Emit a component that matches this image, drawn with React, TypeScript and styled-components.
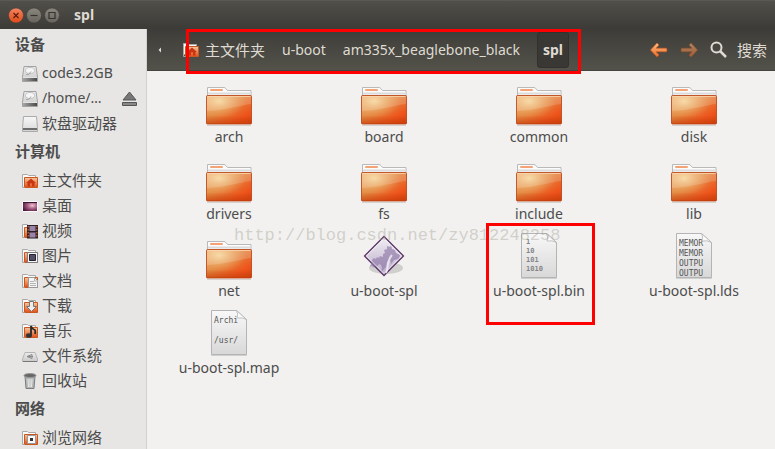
import React from "react";
import styled, { createGlobalStyle, css } from "styled-components";

const uiFont = `"Noto Sans", "Noto Sans CJK SC", sans-serif`;

const GlobalStyle = createGlobalStyle`
  * { box-sizing: border-box; }
  body {
    margin: 0;
    background: #f2f1f0;
    color: #4c4c4c;
    font-family: ${uiFont};
    font-size: 14px;
  }
  button {
    margin: 0;
    padding: 0;
    border: 0;
    background: none;
    color: inherit;
    font: inherit;
    cursor: default;
  }
  svg { display: block; flex: none; }
`;

const Window = styled.div`
  position: relative;
  display: flex;
  flex-direction: column;
  height: 100vh;
  overflow: hidden;
`;

const TitleBar = styled.header`
  display: flex;
  align-items: center;
  flex: none;
  height: 29px;
  padding: 0 8px;
  gap: 2px;
  border-top: 1px solid #5b5a52;
  background: linear-gradient(#504f49, #3c3b37);
  color: #dfdbd2;
`;

const Title = styled.h1`
  margin: 0 0 0 12px;
  font-size: 14px;
  line-height: 20px;
  font-weight: 700;
`;

const Body = styled.div`
  display: flex;
  flex: 1;
  min-height: 0;
`;

const Sidebar = styled.nav`
  flex: none;
  width: 147px;
  overflow: hidden;
  border-right: 1px solid #d2d1cf;
  background: #e7e6e4;
`;

const GroupTitle = styled.h2`
  margin: 0;
  padding: 0 0 2px 15px;
  font-size: 15px;
  line-height: 30px;
  font-weight: 700;
`;

const PlaceList = styled.ul`
  margin: 0;
  padding: 0;
  list-style: none;
`;

const PlaceRow = styled.li`
  display: flex;
  align-items: center;
  justify-content: space-between;
  height: 25px;
  padding: 0 9px 0 22px;
`;

const PlaceButton = styled.button`
  display: flex;
  align-items: center;
  gap: 4px;
  white-space: nowrap;
`;

const PlaceName = styled.span<{ $cjk: boolean }>`
  line-height: 22px;
  padding-bottom: 2px;
  font-size: ${(p) => (p.$cjk ? 15 : 14)}px;
`;

const Content = styled.div`
  display: flex;
  flex-direction: column;
  flex: 1;
  min-width: 0;
`;

const Toolbar = styled.div`
  display: flex;
  align-items: center;
  justify-content: space-between;
  flex: none;
  height: 42px;
  padding: 0 8px 0 3px;
  border-bottom: 1px solid #45443f;
  background: linear-gradient(#3d3c38, #53524a);
  color: #dfdbd2;
`;

const PathBar = styled.nav`
  display: flex;
  align-items: center;
  gap: 1px;
`;

const ScrollButton = styled.button`
  height: 36px;
  padding: 0 8px;
  margin-right: 4px;
`;

const PathButton = styled.button<{ $current?: boolean; $cjk?: boolean }>`
  display: flex;
  align-items: center;
  gap: 6px;
  height: 36px;
  padding: 0 8px;
  line-height: 20px;
  white-space: nowrap;
  ${(p) => p.$cjk && css`font-size: 15px;`}
  ${(p) =>
    p.$current &&
    css`
      margin-left: 8px;
      padding: 0 5px;
      border: 1px solid #32312d;
      border-radius: 3px;
      background: #393834;
      font-weight: 700;
    `}
`;

const Tools = styled.div`
  display: flex;
  align-items: center;
  gap: 12px;
`;

const SearchButton = styled.button`
  display: flex;
  align-items: center;
  gap: 10px;
  font-size: 15px;
`;

const FileGrid = styled.main`
  display: grid;
  grid-template-columns: repeat(4, 1fr);
  gap: 1px;
  padding: 7px 4px 0 5px;
`;

const FileButton = styled.button`
  display: flex;
  flex-direction: column;
  align-items: center;
  height: 76px;
  line-height: 22px;
`;

const Watermark = styled.div`
  position: absolute;
  left: 234px;
  top: 225px;
  color: rgba(160, 160, 145, 0.42);
  font-family: "Liberation Mono", monospace;
  font-size: 17px;
  line-height: 22px;
  pointer-events: none;
`;

const Mark = styled.div<{ $target: "path" | "file" }>`
  position: absolute;
  border: 3px solid #fe0000;
  pointer-events: none;
  ${(p) =>
    p.$target === "path"
      ? css`left: 186px; top: 29px; width: 395px; height: 45px;`
      : css`left: 486px; top: 223px; width: 109px; height: 102px;`}
`;

const GradientDefs = styled.svg`
  position: absolute;
`;

const Gradients = () => (
  <GradientDefs width="0" height="0" aria-hidden="true">
    <defs>
      <linearGradient id="front" x1="0" y1="0" x2="1" y2="1">
        <stop offset="0" stopColor="#f0ae70" />
        <stop offset="0.4" stopColor="#e28b43" />
        <stop offset="0.78" stopColor="#ee531b" />
        <stop offset="1" stopColor="#d9450f" />
      </linearGradient>
      <radialGradient id="glow" cx="0.28" cy="0.2" r="0.6">
        <stop offset="0" stopColor="#f7dca0" stopOpacity="0.9" />
        <stop offset="1" stopColor="#f0a868" stopOpacity="0" />
      </radialGradient>
      <linearGradient id="floor" x1="0" y1="0" x2="0" y2="1">
        <stop offset="0.7" stopColor="#c03a08" stopOpacity="0" />
        <stop offset="1" stopColor="#c03a08" stopOpacity="0.6" />
      </linearGradient>
      <linearGradient id="paper" x1="0" y1="0" x2="0" y2="1">
        <stop offset="0" stopColor="#f8f8f8" />
        <stop offset="1" stopColor="#d8d8d8" />
      </linearGradient>
      <linearGradient id="small" x1="0" y1="0" x2="0" y2="1">
        <stop offset="0" stopColor="#f5c9a0" />
        <stop offset="1" stopColor="#e04e16" />
      </linearGradient>
      <linearGradient id="metal" x1="0" y1="0" x2="0" y2="1">
        <stop offset="0" stopColor="#ececec" />
        <stop offset="1" stopColor="#c9c9c9" />
      </linearGradient>
      <linearGradient id="base" x1="0" y1="0" x2="1" y2="0">
        <stop offset="0" stopColor="#a5a5a5" />
        <stop offset="1" stopColor="#4a4a4a" />
      </linearGradient>
      <linearGradient id="gem" x1="0" y1="0" x2="0" y2="1">
        <stop offset="0" stopColor="#f1eef3" />
        <stop offset="1" stopColor="#b9abc9" />
      </linearGradient>
      <linearGradient id="arrow" x1="0" y1="0" x2="0" y2="1">
        <stop offset="0" stopColor="#fbbf83" />
        <stop offset="1" stopColor="#ef6a26" />
      </linearGradient>
      <linearGradient id="closeFill" x1="0" y1="0" x2="0" y2="1">
        <stop offset="0" stopColor="#f58463" />
        <stop offset="1" stopColor="#df4a16" />
      </linearGradient>
      <linearGradient id="greyFill" x1="0" y1="0" x2="0" y2="1">
        <stop offset="0" stopColor="#8a887f" />
        <stop offset="1" stopColor="#66645c" />
      </linearGradient>
      <radialGradient id="wall" cx="0.65" cy="0.4" r="0.7">
        <stop offset="0" stopColor="#f3c4d0" />
        <stop offset="0.5" stopColor="#a0567e" />
        <stop offset="1" stopColor="#4a1638" />
      </radialGradient>
    </defs>
  </GradientDefs>
);

const WindowIcon = ({ kind }: { kind: "close" | "min" | "max" }) => (
  <svg width="16" height="18" viewBox="0 0 16 18">
    <circle cx="8" cy="9.5" r="7.5" fill={kind === "close" ? "url(#closeFill)" : "url(#greyFill)"} stroke="#3d3c37" strokeWidth="0.6" />
    <g fill="none" stroke={kind === "close" ? "#5a1d0b" : "#34332f"} strokeWidth="1.2">
      {kind === "close" && <path d="M5.500 7l5 5M10.500 7l-5 5" />}
      {kind === "min" && <path d="M4.500 9.500h7" />}
      {kind === "max" && <path d="M5 6.500h6v6H5z" />}
    </g>
  </svg>
);

const FolderIcon = () => (
  <svg width="48" height="48" viewBox="0 0 48 48">
    <path d="M2 47.5h44" stroke="#000" strokeOpacity="0.12" />
    <path d="M2.500 18V9.500h16.500q1 0 1.800 1l1.700 2h23.500V18z" fill="#fbfbfb" stroke="#b9b9b9" />
    <path d="M3 14.500h43v2H3z" fill="#dcdcdc" />
    <rect x="5" y="11" width="13" height="2" rx="1" fill="#f3a376" />
    <rect x="1.500" y="17.500" width="45" height="28.500" rx="1" fill="url(#front)" />
    <rect x="1.500" y="17.500" width="45" height="28.500" rx="1" fill="url(#glow)" />
    <path d="M2 18h44v8C36 27 22 32 2 33z" fill="#fff" fillOpacity="0.16" />
    <rect x="1.500" y="17.500" width="45" height="28.500" rx="1" fill="url(#floor)" />
    <path d="M2.500 18.500h43" stroke="#fbd6ae" strokeOpacity="0.8" />
    <rect x="1.500" y="17.500" width="45" height="28.500" rx="1" fill="none" stroke="#b83f10" strokeOpacity="0.8" />
  </svg>
);

const PageIcon = ({ lines, binary }: { lines: string[]; binary?: boolean }) => (
  <svg width="48" height="48" viewBox="0 0 48 48">
    <path d="M6 46.500h36" stroke="#000" strokeOpacity="0.14" />
    <path d="M6.500 1.500h25l10 9v35h-35z" fill="url(#paper)" stroke="#b4b4b4" />
    <g
      fill={binary ? "#858585" : "#555"}
      fontFamily="'DejaVu Sans Mono', monospace"
      fontSize={binary ? 7 : 8}
      fontWeight={binary ? 700 : 400}
    >
      {lines.map((line, i) => (
        <text key={i} x={binary ? 11 : 9} y={binary ? 12 + i * 9 : 14 + i * 10}>
          {line}
        </text>
      ))}
    </g>
    <path d="M31.500 1.500l10 9q-4-2.500-9.500-1.500 1.500-4-.5-7.500z" fill="#fafafa" stroke="#b4b4b4" strokeWidth="0.800" />
  </svg>
);

const ProgramIcon = () => (
  <svg width="48" height="48" viewBox="0 0 48 48">
    <ellipse cx="26" cy="36" rx="17" ry="6" fill="#000" fillOpacity="0.14" />
    <path d="M24 4.500L43.500 24 24 43.500 4.500 24z" fill="url(#gem)" stroke="#5c3566" strokeWidth="1.300" />
    <path
      d="M12 28l2-2 2 1 1-2 2 1 1-2 3 1v-3l2-1-1-3 3-1v-3l3 1 1-2 1 4 3 1 1 3 4 2-1 4-5 1-3 4-1-4-3 2-1 5-3 3-2 4 1-7-2-3-2 1-1 2-2-1-1 2-2-2-2 1z"
      fill="#8f78a8"
      fillOpacity="0.65"
    />
    <path d="M26 41c3-6 0-11 6-18" fill="none" stroke="#f3eff6" strokeWidth="2" strokeOpacity="0.8" />
    <path d="M24 6.500L41.500 24 24 41.500 6.500 24z" fill="none" stroke="#fff" strokeOpacity="0.6" />
  </svg>
);

type PlaceKind =
  | "disk" | "floppy" | "home" | "desktop" | "video" | "picture" | "document"
  | "download" | "music" | "system" | "trash" | "network";

const SmallFolder = () => (
  <>
    <path d="M.5 13V1.500h5l1 1h7V6" fill="#f9f9f9" stroke="#a9a9a9" />
    <path d="M2.500 4.500h13v10h-13z" fill="url(#small)" stroke="#c9571f" />
    <path d="M.5 2v12.500h2" fill="none" stroke="#a9a9a9" />
  </>
);

const placeArt: Record<PlaceKind, React.ReactNode> = {
  disk: (
    <>
      <path d="M2 .5h12l1.500 10.500v4.500H.5V11z" fill="url(#metal)" stroke="#a2a2a2" />
      <ellipse cx="8" cy="4.500" rx="4.500" ry="3" fill="#f6f6f6" stroke="#b8b8b8" strokeWidth="0.800" />
      <path d="M4 8.500q3 1.500 5-3" fill="none" stroke="#a8a8a8" />
      <path d="M1 11.500h14V15H1z" fill="url(#base)" />
      <path d="M1 11.500h14" stroke="#e4e4e4" />
    </>
  ),
  floppy: (
    <>
      <path d="M1.500.5h13l1 11v4H.5v-4z" fill="url(#paper)" stroke="#aaa" />
      <path d="M1 13h14" stroke="#222" strokeWidth="1.200" />
      <path d="M1 14.500h14" stroke="#d5d5d5" />
    </>
  ),
  home: (
    <>
      <SmallFolder />
      <path d="M9 5.500l5 4.500h-1.500v3.500h-2.500v-3h-2v3H5.500V10H4z" fill="#c93611" />
    </>
  ),
  desktop: (
    <>
      <path d="M.5 3.500h15v10H.5z" fill="url(#wall)" stroke="#fafafa" />
      <path d="M1 4.500h14" stroke="#3b1730" />
    </>
  ),
  video: (
    <>
      <SmallFolder />
      <path d="M5 2h11v13.500H5z" fill="#2b2028" />
      <path d="M7.500 3h6v5h-6zM7.500 9.500h6v5h-6z" fill="#9b84a8" />
      <path d="M6.200 3v12M14.800 3v12" stroke="#e9752f" strokeDasharray="1.500 1.500" />
    </>
  ),
  picture: (
    <>
      <SmallFolder />
      <path d="M5.500 4.500h10v10h-10z" fill="#f6f6f6" stroke="#7c7c7c" />
      <path d="M7.500 6.500h6v6h-6z" fill="#554c66" stroke="#26232e" />
    </>
  ),
  document: (
    <>
      <SmallFolder />
      <path d="M6.500 4.500h6l3 3v7h-9z" fill="#f5f5f5" stroke="#989898" />
      <path d="M8 8.500h4M8 10.500h6M8 12.500h6M12.500 5v3h3" fill="none" stroke="#b2b2b2" />
    </>
  ),
  download: (
    <>
      <SmallFolder />
      <path d="M7.500 3.500h4v5h3l-5 5-5-5h3z" fill="#ededed" stroke="#777" />
    </>
  ),
  music: (
    <>
      <SmallFolder />
      <path d="M9 12V3q1 3 3 3.500T13 11" fill="none" stroke="#292929" strokeWidth="1.800" />
      <ellipse cx="7" cy="12.500" rx="3" ry="2.300" fill="#333" />
    </>
  ),
  system: (
    <>
      <path d="M3 4.500h10l2.500 6.500v2.500H.5V11z" fill="url(#metal)" stroke="#b4b4b4" />
      <path d="M1 13.500h14" stroke="#777" />
      <path d="M5 8.500l5-2v4l-5-2h6" fill="none" stroke="#8a8a8a" />
    </>
  ),
  trash: (
    <>
      <path d="M3 3h10l-1 12.500H4z" fill="#b5b7b7" stroke="#7b7d7d" />
      <path d="M6 6l.5 8M8 6v8M10 6l-.5 8" stroke="#e8e8e8" />
      <ellipse cx="8" cy="2.500" rx="6" ry="2" fill="#666" stroke="#999" />
    </>
  ),
  network: (
    <>
      <SmallFolder />
      <path d="M5.500 5.500h8v8h-8z" fill="#fafafa" stroke="#999" />
      <path d="M8 8h3v3H8z" fill="#333" />
    </>
  ),
};

const PlaceIcon = ({ kind }: { kind: PlaceKind }) => (
  <svg width="16" height="16" viewBox="0 0 16 16">{placeArt[kind]}</svg>
);

const EjectIcon = () => (
  <svg width="15" height="16" viewBox="0 0 15 16">
    <path d="M7.500 1l6.500 8H1z" fill="#777" stroke="#555" />
    <path d="M.5 11.500h14v3H.5z" fill="#888" stroke="#555" />
  </svg>
);

const ArrowIcon = ({ forward }: { forward?: boolean }) => (
  <svg width="18" height="16" viewBox="0 0 18 16" opacity={forward ? 0.55 : 1}>
    <path
      d={
        forward
          ? "M17.500 8l-6.500 7-2-2 3-3.200H1.500Q.5 8 1.500 6.200H12L9 3l2-2z"
          : "M.5 8L7 1l2 2-3 3.200h10.500q1 1.800 0 3.600H6L9 13l-2 2z"
      }
      fill="url(#arrow)"
      stroke="#d2581f"
      strokeWidth="0.600"
    />
  </svg>
);

const SearchIcon = () => (
  <svg width="17" height="17" viewBox="0 0 17 17" fill="none" stroke="#dfdbd2">
    <circle cx="6.500" cy="6.500" r="5" strokeWidth="2" />
    <path d="M10 10l6 6" strokeWidth="2.500" />
  </svg>
);

interface Place {
  name: string;
  kind: PlaceKind;
  ejectable?: boolean;
}

const groups: { title: string; places: Place[] }[] = [
  {
    title: "设备",
    places: [
      { name: "code3.2GB", kind: "disk" },
      { name: "/home/…", kind: "disk", ejectable: true },
      { name: "软盘驱动器", kind: "floppy" },
    ],
  },
  {
    title: "计算机",
    places: [
      { name: "主文件夹", kind: "home" },
      { name: "桌面", kind: "desktop" },
      { name: "视频", kind: "video" },
      { name: "图片", kind: "picture" },
      { name: "文档", kind: "document" },
      { name: "下载", kind: "download" },
      { name: "音乐", kind: "music" },
      { name: "文件系统", kind: "system" },
      { name: "回收站", kind: "trash" },
    ],
  },
  { title: "网络", places: [{ name: "浏览网络", kind: "network" }] },
];

const folder = <FolderIcon />;

const files: { name: string; icon: React.ReactNode }[] = [
  ...["arch", "board", "common", "disk", "drivers", "fs", "include", "lib", "net"].map((name) => ({
    name,
    icon: folder,
  })),
  { name: "u-boot-spl", icon: <ProgramIcon /> },
  { name: "u-boot-spl.bin", icon: <PageIcon binary lines={["1", "10", "101", "1010"]} /> },
  { name: "u-boot-spl.lds", icon: <PageIcon lines={["MEMOR", "MEMOR", "OUTPU", "OUTPU"]} /> },
  { name: "u-boot-spl.map", icon: <PageIcon lines={["Archi", "", "/usr/"]} /> },
];

const isCjk = (text: string) => /[\u4e00-\u9fff]/.test(text);

export default function App() {
  return (
    <>
      <GlobalStyle />
      <Gradients />
      <Window>
        <TitleBar>
          <button aria-label="Close"><WindowIcon kind="close" /></button>
          <button aria-label="Minimize"><WindowIcon kind="min" /></button>
          <button aria-label="Maximize"><WindowIcon kind="max" /></button>
          <Title>spl</Title>
        </TitleBar>
        <Body>
          <Sidebar>
            {groups.map((group) => (
              <section key={group.title}>
                <GroupTitle>{group.title}</GroupTitle>
                <PlaceList>
                  {group.places.map((place) => (
                    <PlaceRow key={place.name}>
                      <PlaceButton>
                        <PlaceIcon kind={place.kind} />
                        <PlaceName $cjk={isCjk(place.name)}>{place.name}</PlaceName>
                      </PlaceButton>
                      {place.ejectable && (
                        <button aria-label="Eject"><EjectIcon /></button>
                      )}
                    </PlaceRow>
                  ))}
                </PlaceList>
              </section>
            ))}
          </Sidebar>
          <Content>
            <Toolbar>
              <PathBar>
                <ScrollButton aria-label="Scroll path">
                  <svg width="4" height="6" viewBox="0 0 4 6"><path d="M3 .5v5L.5 3z" fill="#dfdbd2" /></svg>
                </ScrollButton>
                <PathButton $cjk><PlaceIcon kind="home" />主文件夹</PathButton>
                <PathButton>u-boot</PathButton>
                <PathButton>am335x_beaglebone_black</PathButton>
                <PathButton $current>spl</PathButton>
              </PathBar>
              <Tools>
                <button aria-label="Back"><ArrowIcon /></button>
                <button aria-label="Forward"><ArrowIcon forward /></button>
                <SearchButton><SearchIcon />搜索</SearchButton>
              </Tools>
            </Toolbar>
            <FileGrid>
              {files.map((file) => (
                <FileButton key={file.name}>
                  {file.icon}
                  {file.name}
                </FileButton>
              ))}
            </FileGrid>
          </Content>
        </Body>
        <Watermark>http://blog.csdn.net/zy812248258</Watermark>
        <Mark $target="path" />
        <Mark $target="file" />
      </Window>
    </>
  );
}
